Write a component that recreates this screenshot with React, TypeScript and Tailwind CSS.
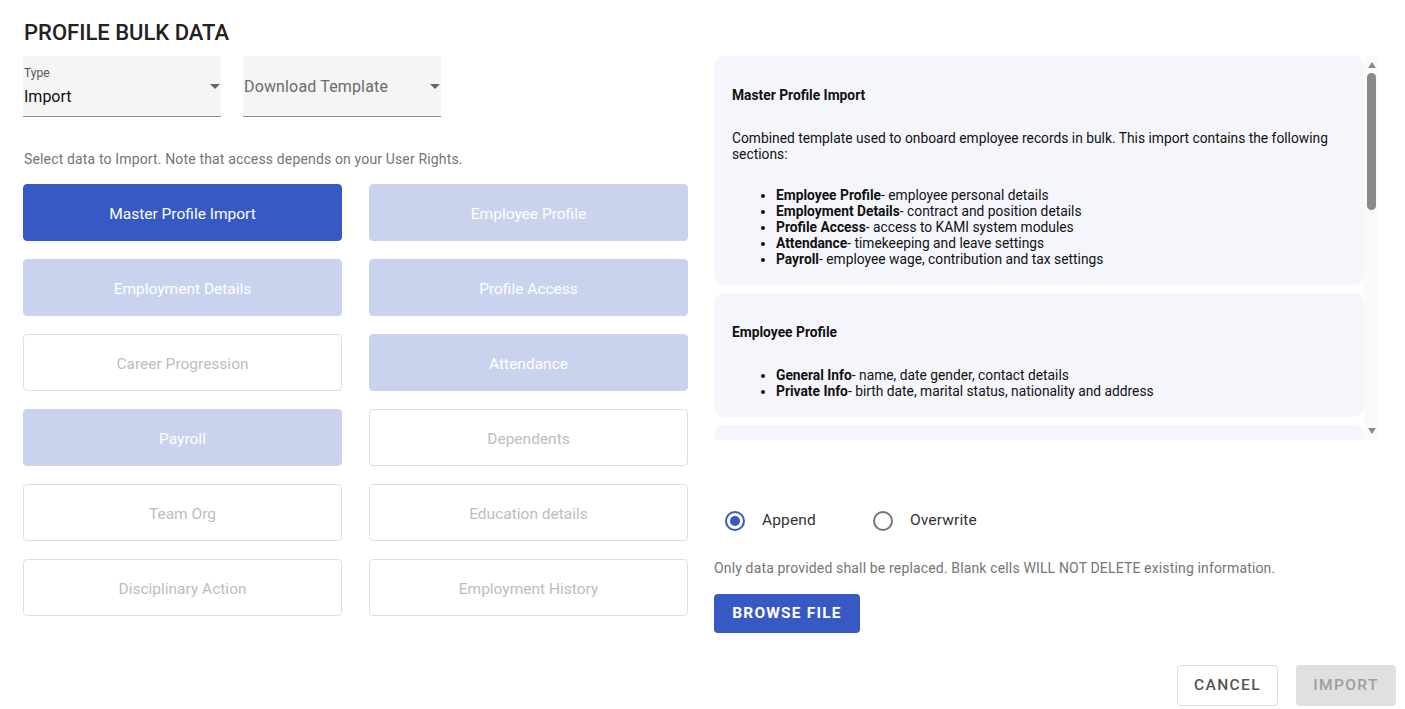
import { useState } from 'react'

type Tile = { label: string; state: 'active' | 'enabled' | 'disabled' }

const tiles: Tile[] = [
  { label: 'Master Profile Import', state: 'active' },
  { label: 'Employee Profile', state: 'enabled' },
  { label: 'Employment Details', state: 'enabled' },
  { label: 'Profile Access', state: 'enabled' },
  { label: 'Career Progression', state: 'disabled' },
  { label: 'Attendance', state: 'enabled' },
  { label: 'Payroll', state: 'enabled' },
  { label: 'Dependents', state: 'disabled' },
  { label: 'Team Org', state: 'disabled' },
  { label: 'Education details', state: 'disabled' },
  { label: 'Disciplinary Action', state: 'disabled' },
  { label: 'Employment History', state: 'disabled' },
]

type Section = { title: string; intro?: string; items: [string, string][] }

const sections: Section[] = [
  {
    title: 'Master Profile Import',
    intro:
      'Combined template used to onboard employee records in bulk. This import contains the following sections:',
    items: [
      ['Employee Profile', 'employee personal details'],
      ['Employment Details', 'contract and position details'],
      ['Profile Access', 'access to KAMI system modules'],
      ['Attendance', 'timekeeping and leave settings'],
      ['Payroll', 'employee wage, contribution and tax settings'],
    ],
  },
  {
    title: 'Employee Profile',
    items: [
      ['General Info', 'name, date gender, contact details'],
      ['Private Info', 'birth date, marital status, nationality and address'],
    ],
  },
  {
    title: 'Employment Details',
    items: [
      ['Contract', 'employment type, hire date and regularization'],
      ['Position', 'job title, department, rank and cost center'],
    ],
  },
  {
    title: 'Profile Access',
    items: [
      ['Modules', 'access to KAMI system modules'],
      ['User Rights', 'roles and approval levels'],
    ],
  },
  {
    title: 'Attendance',
    items: [
      ['Timekeeping', 'schedules, shifts and rest days'],
      ['Leave', 'leave types and credits'],
    ],
  },
  {
    title: 'Payroll',
    items: [
      ['Wage', 'basic pay, pay frequency and allowances'],
      ['Contributions', 'government contributions and tax settings'],
    ],
  },
]

function SelectField({ label, value, placeholder }: { label?: string; value?: string; placeholder?: string }) {
  return (
    <div className="relative h-[61px] w-[198px] rounded-t-[4px] border-b border-[#8f8f8f] bg-[#f5f5f5] pl-px">
      {label ? (
        <>
          <p className="pt-[9px] text-[12px] leading-[16px] text-[#555]">{label}</p>
          <p className="mt-[4px] text-[16px] leading-[24px] text-[#111]">{value}</p>
        </>
      ) : (
        <p className="pt-[19px] text-[16px] leading-[24px] tracking-[0.15px] text-[#6b6b6b]">{placeholder}</p>
      )}
      <span className="absolute right-[1px] top-[28px] h-0 w-0 border-x-[5px] border-t-[5px] border-x-transparent border-t-[#666]" />
    </div>
  )
}

function TileButton({ tile }: { tile: Tile }) {
  const styles = {
    active: 'border-[#3759c4] bg-[#3759c4] text-white',
    enabled: 'border-[#cad3ee] bg-[#cad3ee] text-white',
    disabled: 'border-[#e0e0e0] bg-white text-[#bdbdbd]',
  }[tile.state]
  return (
    <button
      className={`flex h-[57px] items-center justify-center rounded-[4px] border pt-[4px] text-[15.5px] ${styles}`}
    >
      {tile.label}
    </button>
  )
}

function Radio({ checked, label, onClick }: { checked: boolean; label: string; onClick: () => void }) {
  return (
    <label className="flex h-[42px] cursor-pointer items-center" onClick={onClick}>
      <span className="flex h-[42px] w-[42px] items-center justify-center">
        <span
          className={`flex h-[20px] w-[20px] items-center justify-center rounded-full border-2 ${
            checked ? 'border-[#3759c4]' : 'border-[#757575]'
          }`}
        >
          {checked && <span className="h-[10px] w-[10px] rounded-full bg-[#3759c4]" />}
        </span>
      </span>
      <span className="ml-[6px] text-[15.5px] tracking-[0.15px] text-[#333]">{label}</span>
    </label>
  )
}

function ScrollBar() {
  return (
    <div className="flex h-[384px] w-[15px] flex-col items-center bg-[#fafafa]">
      <span className="mt-[6px] h-0 w-0 border-x-[4px] border-b-[6px] border-x-transparent border-b-[#8a8a8a]" />
      <span className="mt-[5px] h-[137px] w-[9px] rounded-full bg-[#8a8a8a]" />
      <span className="mt-auto mb-[6px] h-0 w-0 border-x-[4px] border-t-[6px] border-x-transparent border-t-[#8a8a8a]" />
    </div>
  )
}

export default function App() {
  const [mode, setMode] = useState<'append' | 'overwrite'>('append')

  return (
    <div className="min-h-[709px] bg-white pl-[23px] pr-[9px] font-['Roboto',sans-serif]">
      <h1 className="pl-px pt-[20px] text-[22px] font-medium leading-[26px] text-[#222]">PROFILE BULK DATA</h1>

      <div className="mt-[10px] flex gap-[26px]">
        {/* left column */}
        <div className="w-[665px]">
          <div className="flex gap-[22px]">
            <SelectField label="Type" value="Import" />
            <SelectField placeholder="Download Template" />
          </div>
          <p className="mt-[32px] pl-px text-[14px] leading-[20px] tracking-[0.15px] text-[#757575]">
            Select data to Import. Note that access depends on your User Rights.
          </p>
          <div className="mt-[15px] grid grid-cols-2 gap-x-[27px] gap-y-[18px]">
            {tiles.map((t) => (
              <TileButton key={t.label} tile={t} />
            ))}
          </div>
        </div>

        {/* right column */}
        <div className="w-[665px]">
          <div className="flex">
            <div className="flex h-[384px] w-[650px] flex-col gap-[8px] overflow-y-auto [scrollbar-width:none]">
              {sections.map((s) => (
                <div key={s.title} className="shrink-0 rounded-[10px] bg-[#f5f6fb] px-[18px] pb-[18px] pt-[31px] text-[13.8px] leading-[16px] text-[#111]">
                  <p className="mb-[27px] font-bold">{s.title}</p>
                  {s.intro && <p className="mb-[25px]">{s.intro}</p>}
                  <ul className="list-disc pl-[44px]">
                    {s.items.map(([b, rest]) => (
                      <li key={b}>
                        <strong>{b}</strong>- {rest}
                      </li>
                    ))}
                  </ul>
                </div>
              ))}
            </div>
            <ScrollBar />
          </div>

          <div className="mt-[60px] flex gap-[46px]">
            <Radio checked={mode === 'append'} label="Append" onClick={() => setMode('append')} />
            <Radio checked={mode === 'overwrite'} label="Overwrite" onClick={() => setMode('overwrite')} />
          </div>

          <p className="mt-[16px] text-[14px] leading-[20px] tracking-[0.15px] text-[#757575]">
            Only data provided shall be replaced. Blank cells WILL NOT DELETE existing information.
          </p>

          <button className="mt-[16px] h-[39px] w-[146px] rounded-[4px] bg-[#3759c4] pt-px text-[15.5px] font-bold tracking-[1.2px] text-white">
            BROWSE FILE
          </button>
        </div>
      </div>

      <div className="mt-[32px] flex justify-end gap-[18px]">
        <button className="h-[41px] w-[101px] rounded-[4px] border border-[#dcdcdc] pt-px text-[15.5px] font-medium tracking-[1.4px] text-[#555]">
          CANCEL
        </button>
        <button className="h-[41px] w-[100px] rounded-[4px] bg-[#e0e0e0] pt-px text-[15.5px] font-medium tracking-[1.4px] text-[#9e9e9e]">
          IMPORT
        </button>
      </div>
    </div>
  )
}
